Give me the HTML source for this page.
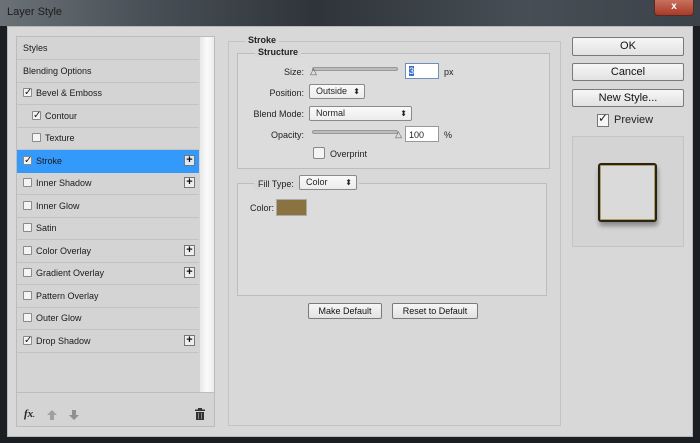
<!DOCTYPE html>
<html><head><meta charset="utf-8"><style>
*{margin:0;padding:0;box-sizing:border-box}
body{width:700px;height:443px;overflow:hidden;background:#1b1f24;font-family:"Liberation Sans",sans-serif;font-size:9px;color:#222;position:relative}
.a{position:absolute}
.title{left:0;top:0;width:700px;height:26px;background:linear-gradient(90deg,#6a7177 0%,#4a5158 20%,#2e343a 45%,#474e55 75%,#3c4249 100%)}
.dlg{left:7px;top:26px;width:686px;height:411px;background:#d8d8d8;border:1px solid #b8b8b8}
.lp{left:16px;top:36px;width:199px;height:391px;background:#d4d4d4;border:1px solid #bcbcbc}
.row{position:absolute;left:17px;width:182px;height:23px;border-bottom:1px solid #c2c2c2;line-height:22px;font-size:9px;color:#1a1a1a}
.cb{position:absolute;top:6px;width:9px;height:9px;border:1px solid #8a8a8a;background:#f4f4f4;border-radius:1px}
.chk::after{content:"✓";position:absolute;left:0;top:-7px;font-size:10px;color:#222}
.plus{position:absolute;right:4px;top:5px;width:11px;height:11px;border:1px solid #777;background:#eee;font-size:11px;line-height:9px;text-align:center;font-weight:bold;color:#111}
.btn{position:absolute;border:1px solid #7a7a7a;background:linear-gradient(#f6f6f6,#e2e2e2);text-align:center;border-radius:2px;color:#111}
.box{position:absolute;border:1px solid #bdbdbd}
.sel{position:absolute;height:15px;border:1px solid #8a8a8a;background:linear-gradient(#fafafa,#ececec);border-radius:2px;line-height:13px;padding-left:6px;font-size:9px}
.sel::after{content:"⬍";position:absolute;right:4px;top:0;font-size:8px}
.lbl{position:absolute;font-size:9px;text-align:right}
</style></head><body>
<div class="a title"></div>
<div class="a" style="left:7px;top:6px;color:#1c1c1c;font-size:11px;">Layer Style</div>
<div class="a" style="left:654px;top:0;width:40px;height:16px;background:linear-gradient(#c8705f,#a83a28);border:1px solid #5a2a22;border-top:none;border-radius:0 0 4px 4px;color:#fff;text-align:center;font-weight:bold;font-size:10px;line-height:14px">x</div>
<div class="a dlg"></div>
<div class="a lp"></div>
<div class="a" style="left:200px;top:37px;width:14px;height:355px;background:linear-gradient(90deg,#e8e8e8,#fbfbfb,#ececec)"></div>
<div class="a" style="left:17px;top:392px;width:197px;height:1px;background:#bdbdbd"></div>

<div class="row" style="top:37px"><span style="position:absolute;left:6px">Styles</span></div>
<div class="row" style="top:59.5px"><span style="position:absolute;left:6px">Blending Options</span></div>
<div class="row" style="top:82px"><span class="cb chk" style="left:6px"></span><span style="position:absolute;left:19px">Bevel &amp; Emboss</span></div>
<div class="row" style="top:104.5px"><span class="cb chk" style="left:15px"></span><span style="position:absolute;left:28px">Contour</span></div>
<div class="row" style="top:127px"><span class="cb" style="left:15px"></span><span style="position:absolute;left:28px">Texture</span></div>
<div class="row" style="top:149.5px;background:#3399fa;border-color:#3399fa"><span class="cb chk" style="left:6px"></span><span style="position:absolute;left:19px">Stroke</span><span class="plus" style="background:#dde8f4">+</span></div>
<div class="row" style="top:172px"><span class="cb" style="left:6px"></span><span style="position:absolute;left:19px">Inner Shadow</span><span class="plus">+</span></div>
<div class="row" style="top:194.5px"><span class="cb" style="left:6px"></span><span style="position:absolute;left:19px">Inner Glow</span></div>
<div class="row" style="top:217px"><span class="cb" style="left:6px"></span><span style="position:absolute;left:19px">Satin</span></div>
<div class="row" style="top:239.5px"><span class="cb" style="left:6px"></span><span style="position:absolute;left:19px">Color Overlay</span><span class="plus">+</span></div>
<div class="row" style="top:262px"><span class="cb" style="left:6px"></span><span style="position:absolute;left:19px">Gradient Overlay</span><span class="plus">+</span></div>
<div class="row" style="top:284.5px"><span class="cb" style="left:6px"></span><span style="position:absolute;left:19px">Pattern Overlay</span></div>
<div class="row" style="top:307px"><span class="cb" style="left:6px"></span><span style="position:absolute;left:19px">Outer Glow</span></div>
<div class="row" style="top:329.5px"><span class="cb chk" style="left:6px"></span><span style="position:absolute;left:19px">Drop Shadow</span><span class="plus">+</span></div>

<div class="a" style="left:24px;top:408px;font-family:'Liberation Serif',serif;font-style:italic;font-weight:bold;font-size:11px">fx<span style="font-size:7px">.</span></div>
<svg class="a" style="left:47px;top:410px" width="10" height="10"><path d="M5 0L10 5H7V10H3V5H0Z" fill="#a0a0a0"/></svg>
<svg class="a" style="left:69px;top:410px" width="10" height="10"><path d="M5 10L10 5H7V0H3V5H0Z" fill="#909090"/></svg>
<svg class="a" style="left:195px;top:408px" width="10" height="12"><rect x="0" y="1.5" width="10" height="1.5" fill="#333"/><rect x="3" y="0" width="4" height="2" fill="#333"/><rect x="1" y="4" width="8" height="8" fill="#333"/><path d="M3.5 5v6M6.5 5v6" stroke="#999" stroke-width=".8"/></svg>

<div class="box" style="left:228px;top:41px;width:333px;height:385px;border-color:#c4c4c4"></div>
<div class="a" style="left:245px;top:35px;background:#d8d8d8;padding:0 3px;font-weight:bold;font-size:9px">Stroke</div>
<div class="box" style="left:237px;top:53px;width:313px;height:116px;background:#dcdcdc"></div>
<div class="a" style="left:255px;top:47px;background:#d8d8d8;padding:0 3px;font-weight:bold;font-size:9px">Structure</div>

<div class="lbl" style="left:240px;top:67px;width:64px">Size:</div>
<div class="a" style="left:312px;top:67px;width:86px;height:4px;border:1px solid #999;border-radius:2px;background:#bbb"></div>
<div class="a" style="left:310px;top:66px;font-size:9px;color:#555">△</div>
<div class="a" style="left:405px;top:63px;width:34px;height:16px;border:1px solid #6d8fb8;background:#fff"><span style="position:absolute;left:3px;top:2px;width:5px;height:10px;background:#3a70c8;color:#fff;font-size:9px;line-height:10px">3</span></div>
<div class="a" style="left:444px;top:67px">px</div>

<div class="lbl" style="left:240px;top:88px;width:64px">Position:</div>
<div class="sel" style="left:309px;top:84px;width:56px">Outside</div>
<div class="lbl" style="left:240px;top:109px;width:64px">Blend Mode:</div>
<div class="sel" style="left:309px;top:106px;width:103px">Normal</div>
<div class="lbl" style="left:240px;top:130px;width:64px">Opacity:</div>
<div class="a" style="left:312px;top:130px;width:86px;height:4px;border:1px solid #999;border-radius:2px;background:#bbb"></div>
<div class="a" style="left:395px;top:129px;font-size:9px;color:#555">△</div>
<div class="a" style="left:405px;top:126px;width:34px;height:16px;border:1px solid #999;background:#fff;padding:3px 0 0 3px">100</div>
<div class="a" style="left:444px;top:130px">%</div>
<div class="a" style="left:313px;top:147px;width:12px;height:12px;border:1px solid #888;background:#f4f4f4;border-radius:2px"></div>
<div class="a" style="left:330px;top:149px">Overprint</div>

<div class="box" style="left:237px;top:183px;width:310px;height:113px;background:#dcdcdc"></div>
<div class="a" style="left:254px;top:176px;width:105px;height:14px;background:#d8d8d8"></div>
<div class="a" style="left:258px;top:179px">Fill Type:</div>
<div class="sel" style="left:299px;top:175px;width:58px">Color</div>
<div class="a" style="left:250px;top:203px">Color:</div>
<div class="a" style="left:276px;top:199px;width:31px;height:17px;background:#8a7340;border:1px solid #aaa"></div>

<div class="btn" style="left:308px;top:303px;width:74px;height:16px;line-height:14px">Make Default</div>
<div class="btn" style="left:392px;top:303px;width:86px;height:16px;line-height:14px">Reset to Default</div>

<div class="btn" style="left:572px;top:37px;width:112px;height:19px;line-height:17px;font-size:11px">OK</div>
<div class="btn" style="left:572px;top:63px;width:112px;height:18px;line-height:16px;font-size:11px">Cancel</div>
<div class="btn" style="left:572px;top:89px;width:112px;height:18px;line-height:16px;font-size:11px">New Style...</div>
<div class="a" style="left:597px;top:114px;width:12px;height:13px;border:1px solid #777;background:#f6f6f6"><span style="position:absolute;left:0;top:-4px;font-size:12px">✓</span></div>
<div class="a" style="left:614px;top:114px;font-size:11px">Preview</div>
<div class="a" style="left:572px;top:136px;width:112px;height:111px;border:1px solid #c4c4c4;background:#d4d4d4"></div>
<div class="a" style="left:598px;top:163px;width:59px;height:59px;border:2px solid #2a2418;border-radius:3px;background:#dadada;box-shadow:1px 4px 5px rgba(0,0,0,.35),inset 0 0 0 1px #b0a060"></div>
</body></html>
